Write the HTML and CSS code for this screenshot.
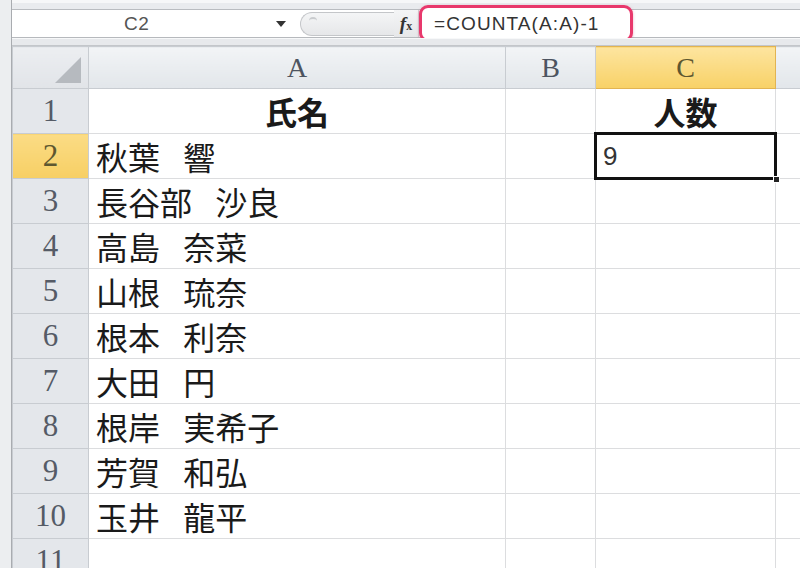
FILE: index.html
```html
<!DOCTYPE html>
<html lang="ja">
<head>
    <meta charset="UTF-8">
    <title>COUNTA</title>
    <link rel="stylesheet" href="styles.css">
</head>
<body>
    <div class="app">
        <div class="edge"></div>
        <div class="main">
            <div class="top-strip"></div>
            <div class="formula-bar">
                <div class="namebox">
                    <span class="ref">C2</span>
                    <span class="drop"></span>
                </div>
                <div class="grip"><span class="dot"></span></div>
                <div class="fx"><i>f</i><span>x</span></div>
                <div class="formula">
                    <span class="mark">=COUNTA(A:A)-1</span>
                </div>
            </div>
            <div class="band"></div>
            <table class="sheet">
                <colgroup>
                    <col class="c-hd">
                    <col class="c-a">
                    <col class="c-b">
                    <col class="c-c">
                    <col class="c-d">
                </colgroup>
                <tr class="col-hd">
                    <th class="corner"><span class="tri"></span></th>
                    <th>A</th>
                    <th>B</th>
                    <th class="on">C</th>
                    <th></th>
                </tr>
                <tr>
                    <th class="row-hd">1</th>
                    <td class="title">氏名</td>
                    <td></td>
                    <td class="title">人数</td>
                    <td></td>
                </tr>
                <tr>
                    <th class="row-hd on">2</th>
                    <td>秋葉 響</td>
                    <td></td>
                    <td class="sel">9<span class="handle"></span></td>
                    <td></td>
                </tr>
                <tr><th class="row-hd">3</th><td>長谷部 沙良</td><td></td><td></td><td></td></tr>
                <tr><th class="row-hd">4</th><td>高島 奈菜</td><td></td><td></td><td></td></tr>
                <tr><th class="row-hd">5</th><td>山根 琉奈</td><td></td><td></td><td></td></tr>
                <tr><th class="row-hd">6</th><td>根本 利奈</td><td></td><td></td><td></td></tr>
                <tr><th class="row-hd">7</th><td>大田 円</td><td></td><td></td><td></td></tr>
                <tr><th class="row-hd">8</th><td>根岸 実希子</td><td></td><td></td><td></td></tr>
                <tr><th class="row-hd">9</th><td>芳賀 和弘</td><td></td><td></td><td></td></tr>
                <tr><th class="row-hd">10</th><td>玉井 龍平</td><td></td><td></td><td></td></tr>
                <tr><th class="row-hd">11</th><td></td><td></td><td></td><td></td></tr>
            </table>
        </div>
    </div>
</body>
</html>
```

FILE: styles.css
```css
* {
    margin: 0;
    padding: 0;
    box-sizing: border-box;
}
html, body {
    width: 800px;
    height: 568px;
    overflow: hidden;
    background: #fff;
}
.app {
    display: flex;
    height: 568px;
}
.edge {
    width: 12px;
    flex: none;
    background: #eceef0;
    border-right: 1px solid #a9acb0;
}
.main {
    flex: 1;
    display: flex;
    flex-direction: column;
    min-width: 0;
}
.main > * {
    flex: none;
}
.top-strip {
    height: 10px;
    background: #e9ebee;
    border-top: 3px solid #f6f7f8;
    border-bottom: 1px solid #b9bcc0;
}

/* formula bar */
.formula-bar {
    height: 28px;
    display: flex;
    align-items: center;
    background: #fff;
    border-bottom: 1px solid #b6b9bd;
}
.namebox {
    width: 288px;
    height: 100%;
    display: flex;
    align-items: center;
    font-family: "Liberation Sans", Arial, sans-serif;
    font-size: 19px;
    color: #555;
}
.namebox .ref {
    margin-left: 112px;
    letter-spacing: 0.5px;
}
.namebox .drop {
    margin-left: auto;
    margin-right: 14px;
    width: 0;
    height: 0;
    border-left: 5px solid transparent;
    border-right: 5px solid transparent;
    border-top: 6px solid #333;
}
.grip {
    width: 94px;
    height: 24px;
    border: 1px solid #c4c6c9;
    border-right: none;
    border-radius: 12px 0 0 12px;
    background: linear-gradient(#f4f5f6, #e6e7e9);
    padding: 4px 0 0 8px;
}
.grip .dot {
    display: block;
    width: 8px;
    height: 4px;
    border-top: 2px solid #c9cbce;
    border-radius: 4px 4px 0 0;
}
.fx {
    width: 24px;
    height: 100%;
    display: flex;
    align-items: center;
    justify-content: center;
    background: linear-gradient(#f4f5f6, #e6e7e9);
    font-family: "Liberation Serif", serif;
    font-weight: bold;
    color: #333;
}
.fx i {
    font-size: 19px;
}
.fx span {
    font-size: 12px;
    margin-top: 5px;
}
.formula {
    flex: 1;
    height: 100%;
    display: flex;
    align-items: center;
    border-left: 1px solid #d0d2d5;
}
.formula .mark {
    width: 214px;
    height: 37px;
    border: 3px solid #e8386c;
    border-radius: 9px;
    box-shadow: 0 1px 3px rgba(200, 40, 90, 0.35);
    display: flex;
    align-items: center;
    padding-left: 12px;
    font-family: "Liberation Sans", Arial, sans-serif;
    font-size: 19px;
    letter-spacing: 1.1px;
    color: #333;
    background: #fff;
}
.band {
    height: 8px;
    background: #e7e9ec;
    border-top: 1px solid #f7f8f9;
    border-bottom: 1px solid #c3c6ca;
}

/* sheet */
.sheet {
    border-collapse: collapse;
    table-layout: fixed;
    width: 788px;
}
.c-hd { width: 76px; }
.c-a { width: 417px; }
.c-b { width: 90px; }
.c-c { width: 180px; }
.c-d { width: 25px; }

.sheet td,
.sheet th {
    height: 45px;
    border: 1px solid #dcdddf;
    padding: 0;
    overflow: hidden;
    white-space: nowrap;
}
.col-hd th {
    height: 42px;
    background: linear-gradient(#f2f4f6, #e2e6ea);
    border: 1px solid #c8ccd1;
    font-family: "Liberation Serif", serif;
    font-weight: normal;
    font-size: 28px;
    color: #4d5460;
    text-align: center;
}
.col-hd th.on {
    background: linear-gradient(#fde59f, #f8d167);
    border-color: #e2b452;
    color: #5e5730;
}
.col-hd th.corner {
    position: relative;
    background: linear-gradient(#eceef1, #e1e4e8);
}
.corner .tri {
    position: absolute;
    right: 7px;
    bottom: 5px;
    width: 0;
    height: 0;
    border-left: 26px solid transparent;
    border-bottom: 26px solid #b6babf;
}
.row-hd {
    background: #e4e7eb;
    border: 1px solid #c8ccd1 !important;
    font-family: "Liberation Serif", serif;
    font-weight: normal;
    font-size: 31px;
    line-height: 40px;
    color: #555b66;
    text-align: center;
}
.row-hd.on {
    background: linear-gradient(#fbdc85, #f7cf64);
    color: #5e5730;
}
.sheet td {
    font-family: "Noto Sans CJK JP", sans-serif;
    font-size: 32px;
    color: #1a1a1a;
    padding-left: 7px;
    line-height: 40px;
    word-spacing: 16px;
}
.sheet td.title {
    font-weight: bold;
    text-align: center;
    padding-left: 0;
    font-size: 32px;
}
.sheet td.sel {
    position: relative;
    overflow: visible;
    font-family: "Liberation Sans", Arial, sans-serif;
    font-size: 26px;
    color: #333;
}
.sel::after {
    content: "";
    position: absolute;
    left: -2px;
    top: -2px;
    right: -2px;
    bottom: -2px;
    border: 3px solid #111;
}
.sel .handle {
    position: absolute;
    right: -5px;
    bottom: -5px;
    width: 7px;
    height: 7px;
    background: #222;
    border: 1px solid #fff;
    z-index: 1;
}
```
